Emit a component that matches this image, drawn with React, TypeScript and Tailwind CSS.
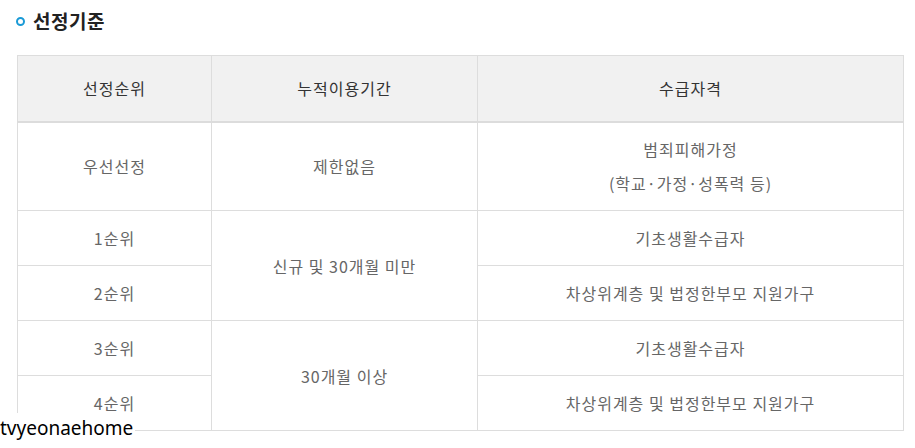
import React from 'react';

const rows = [
  { rank: '1순위', period: '신규 및 30개월 미만', span: 2, qual: '기초생활수급자' },
  { rank: '2순위', qual: '차상위계층 및 법정한부모 지원가구' },
  { rank: '3순위', period: '30개월 이상', span: 2, qual: '기초생활수급자' },
  { rank: '4순위', qual: '차상위계층 및 법정한부모 지원가구' },
];

export default function App() {
  return (
    <div
      className="relative w-[915px] h-[448px] overflow-hidden bg-white"
      style={{ fontFamily: '"Malgun Gothic", "Noto Sans CJK KR", sans-serif' }}
    >
      <div className="flex items-center h-[43px] pl-[16px]">
        <span className="w-[9px] h-[9px] rounded-full border-[2.5px] border-[#1a9ad6] mr-[8px]" />
        <h3 className="text-[19px] font-bold text-[#222] tracking-[0.5px]">선정기준</h3>
      </div>

      <table className="ml-[17px] mt-[12px] w-[886px] border-collapse table-fixed text-center text-[16px] tracking-[1px]">
        <colgroup>
          <col className="w-[194px]" />
          <col className="w-[266px]" />
          <col className="w-[426px]" />
        </colgroup>
        <thead>
          <tr className="h-[66px] bg-[#f1f1f1] text-[#333] border-t border-t-[#ddd] border-b-2 border-b-[#dcdcdc]">
            <th className="font-normal border-x border-[#ddd]">선정순위</th>
            <th className="font-normal border-x border-[#ddd]">누적이용기간</th>
            <th className="font-normal border-x border-[#ddd]">수급자격</th>
          </tr>
        </thead>
        <tbody className="text-[#666]">
          <tr className="h-[89px]">
            <td className="border border-[#ddd]">우선선정</td>
            <td className="border border-[#ddd]">제한없음</td>
            <td className="border border-[#ddd] leading-[34px]">
              범죄피해가정
              <br />
              (학교·가정·성폭력 등)
            </td>
          </tr>
          {rows.map((r) => (
            <tr key={r.rank} className="h-[55px]">
              <td className="border border-[#ddd]">{r.rank}</td>
              {r.period && (
                <td rowSpan={r.span} className="border border-[#ddd]">
                  {r.period}
                </td>
              )}
              <td className="border border-[#ddd]">{r.qual}</td>
            </tr>
          ))}
        </tbody>
      </table>

      <div
        className="absolute left-0 top-[413px] h-[35px] pr-[2px] bg-white text-black text-[19px] leading-[30px]"
        style={{ fontFamily: '"Noto Sans", sans-serif' }}
      >
        tvyeonaehome
      </div>
    </div>
  );
}
